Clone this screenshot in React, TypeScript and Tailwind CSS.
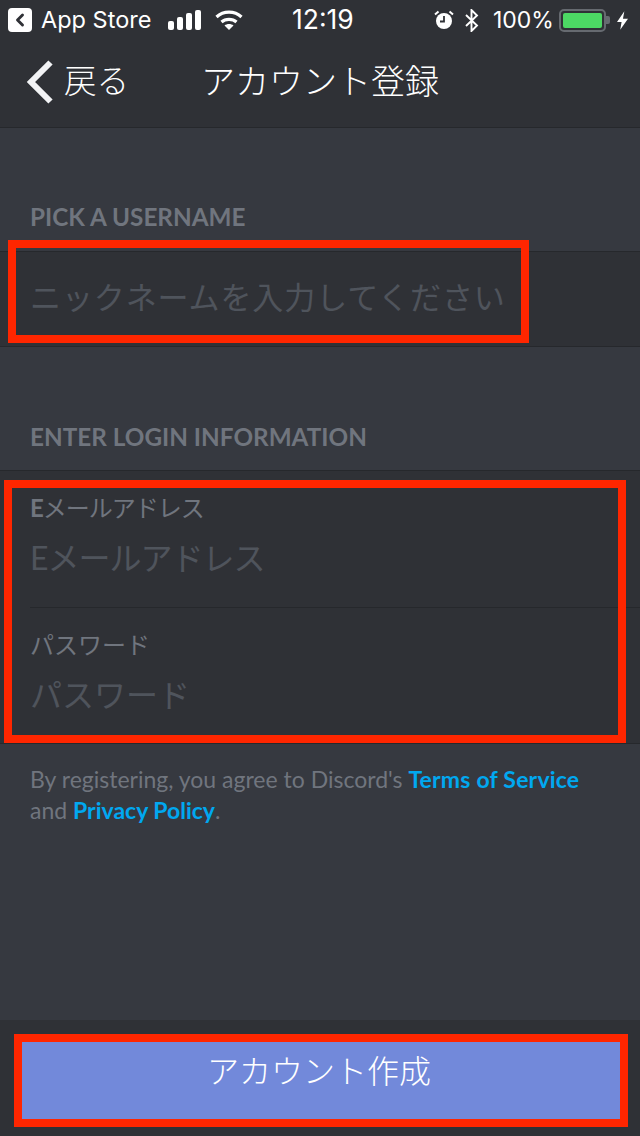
import { ChevronLeft } from "lucide-react";

const FONT = "font-['Lato','Noto_Sans_CJK_JP',sans-serif]";
const JP = "font-['Noto_Sans_CJK_JP',sans-serif]";

function StatusBar() {
  return (
    <div className="flex h-10 items-center pl-2 font-['Inter',sans-serif] text-white">
      <div className="flex h-6 w-6 items-center justify-center rounded-[4px] bg-white">
        <ChevronLeft className="h-5 w-5 text-[#2f3136]" strokeWidth={3.5} />
      </div>
      <span className="ml-[9px] w-[112px] text-[23.5px]">App Store</span>
      <svg className="ml-[15px]" width="33" height="20" viewBox="0 0 33 20" fill="white">
        <rect x="0" y="11" width="6" height="9" rx="2" />
        <rect x="9" y="7" width="6" height="13" rx="2" />
        <rect x="18" y="3" width="6" height="17" rx="2" />
        <rect x="27" y="0" width="6" height="20" rx="2" />
      </svg>
      <svg className="ml-[14px]" width="28" height="20" viewBox="0 0 28 20" fill="none" stroke="white" strokeWidth="3.2">
        <path d="M1.5 7 C8.5 0.5 19.5 0.5 26.5 7" />
        <path d="M6.5 12 C10.5 8.5 17.5 8.5 21.5 12" />
        <path d="M14 20 L9.5 15.5 C12 13.5 16 13.5 18.5 15.5 Z" fill="white" stroke="none" />
      </svg>
      <span className="ml-[49px] w-[64px] text-[26.5px]">12:19</span>
      <svg className="ml-[78px]" width="20" height="20" viewBox="0 0 20 20" fill="white">
        <circle cx="10" cy="11" r="8" />
        <path d="M10 6v5.5H6" stroke="#2f3136" strokeWidth="1.8" fill="none" />
        <path d="M1 4.5 L4.5 1.5 M19 4.5 L15.5 1.5" stroke="white" strokeWidth="2" />
      </svg>
      <svg className="ml-[11px]" width="14" height="23" viewBox="0 0 14 23" fill="none" stroke="white" strokeWidth="1.9">
        <path d="M1 6 L12 16.5 L6.5 22 V1 L12 6.5 L1 17" />
      </svg>
      <span className="ml-[14px] w-[60px] text-[23px]">100%</span>
      <div className="ml-[6px] flex items-center">
        <div className="h-[23px] w-[47px] rounded-[5px] border-2 border-[#666a70] p-[2px]">
          <div className="h-full w-full rounded-[2px] bg-[#4cd964]" />
        </div>
        <div className="h-[8px] w-[4px] rounded-r-[2px] bg-[#666a70]" />
      </div>
      <svg className="ml-[7px]" width="11" height="19" viewBox="0 0 12 20" fill="white">
        <path d="M8 0 L0 11.5 H5 L3.5 20 L12 8 H6.5 Z" />
      </svg>
    </div>
  );
}

function NavBar() {
  return (
    <div className={`flex h-[88px] items-center border-b border-[#26282c] pb-[4px] ${JP} font-light text-white`}>
      <svg className="ml-[26px]" width="28" height="44" viewBox="0 0 28 44" fill="none" stroke="#f2f3f5" strokeWidth="6">
        <path d="M24.5 2.5 L5 22 L24.5 41.5" />
      </svg>
      <span className="mb-[4px] ml-[10px] text-[32.5px]">戻る</span>
      <span className="mb-[4px] ml-[72px] text-[34px]">アカウント登録</span>
    </div>
  );
}

function SectionLabel({ children, className }: { children: string; className: string }) {
  return (
    <p className={`px-[30px] text-[24.3px] font-bold leading-[28px] text-[#70757e] ${className}`}>
      {children}
    </p>
  );
}

function CredField({ label, placeholder, tight }: { label: string; placeholder: string; tight?: boolean }) {
  const isEmail = label.startsWith("E");
  return (
    <div className={`h-[136px] px-[30px] pt-[21px] ${tight ? "tracking-[-1px]" : ""}`}>
      <p className="text-[24px] leading-[32px] text-[#70757e]">
        {isEmail ? <span className="font-bold">E</span> : null}
        {isEmail ? label.slice(1) : label}
      </p>
      <p className="mt-[16px] text-[32px] leading-[36px] text-[#4f545c]">{placeholder}</p>
    </div>
  );
}

export default function App() {
  return (
    <div className={`relative flex h-[1136px] w-[640px] flex-col overflow-hidden bg-[#363940] ${FONT}`}>
      <div className="bg-[#2f3136]">
        <StatusBar />
        <NavBar />
      </div>

      <SectionLabel className="mt-[75px]">PICK A USERNAME</SectionLabel>
      <div className="mt-[20px] flex h-[96px] items-center border-y border-[#26282c] bg-[#2f3136] px-[30px] pb-[4px]">
        <p className="text-[31px] leading-[36px] tracking-[0.9px] text-[#4f545c]">ニックネームを入力してください</p>
      </div>

      <SectionLabel className="mt-[76px]">ENTER LOGIN INFORMATION</SectionLabel>
      <div className="mt-[19px] h-[274px] border-y border-[#26282c] bg-[#2f3136]">
        <CredField label="Eメールアドレス" placeholder="Eメールアドレス" tight />
        <div className="ml-[30px] h-px bg-[#26282c]" />
        <CredField label="パスワード" placeholder="パスワード" />
      </div>

      <p className="mt-[20px] px-[30px] text-[23px] leading-[31px] text-[#70757e]">
        By registering, you agree to Discord's{" "}
        <span className="font-bold tracking-[0.2px] text-[#00a8f0]">Terms of Service</span>
        <br />
        and <span className="font-bold text-[#00a8f0]">Privacy Policy</span>.
      </p>

      <div className="mt-auto h-[116px] bg-[#2f3136] px-[22px] pt-[22px]">
        <div className={`flex h-[77px] w-[598px] items-start justify-center bg-[#7289da] pr-[4px] pt-[6px] ${JP} text-[32px] font-light leading-[42px] text-white`}>
          アカウント作成
        </div>
      </div>

      {/* red annotation boxes drawn over the screenshot */}
      <div className="absolute left-[8px] top-[240px] h-[103px] w-[521px] border-[8px] border-[#ff2600]" />
      <div className="absolute left-[4px] top-[480px] h-[263px] w-[622px] border-[8px] border-[#ff2600]" />
      <div className="absolute left-[14px] top-[1034px] h-[93px] w-[614px] border-[8px] border-[#ff2600]" />
    </div>
  );
}
